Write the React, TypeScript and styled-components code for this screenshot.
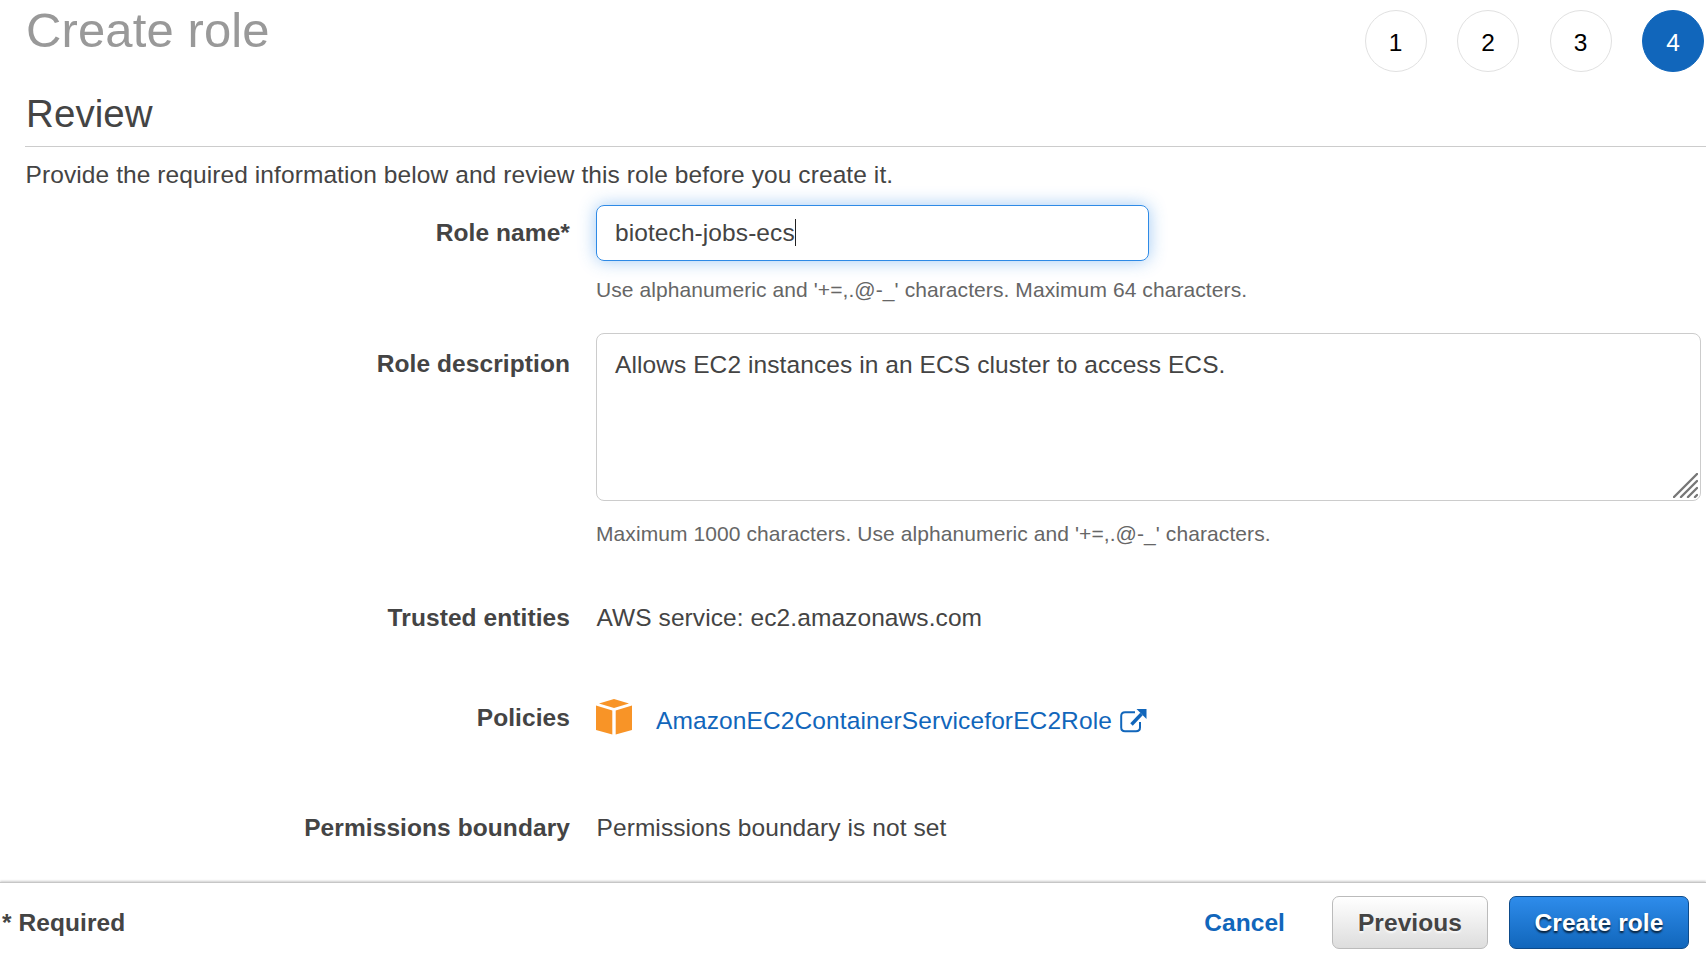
import React from "react";
import styled, { createGlobalStyle, css } from "styled-components";

const GlobalStyle = createGlobalStyle`
  * { box-sizing: border-box; }
  html, body { margin: 0; padding: 0; background: #fff; overflow: hidden; }
  body {
    font-family: "Liberation Sans", Arial, sans-serif;
    font-size: 24.5px;
    line-height: 35px;
    letter-spacing: 0.085px;
    color: #444;
  }
`;

const Page = styled.div`
  display: flex;
  flex-direction: column;
  height: 953px;
`;

const Main = styled.main`
  flex: 1;
  padding-left: 25px;
`;

const Header = styled.header`
  display: flex;
  justify-content: space-between;
  align-items: flex-start;
  height: 90px;
  padding: 0 2px 0 1px;
`;

const Title = styled.h1`
  margin: 2px 0 0;
  font-size: 49px;
  line-height: 56px;
  font-weight: 400;
  letter-spacing: 0.12px;
  color: #999;
`;

const Steps = styled.ol`
  display: flex;
  gap: 30.5px;
  margin: 10px 0 0;
  padding: 0;
  list-style: none;
`;

const Step = styled.li<{ $active?: boolean }>`
  display: flex;
  align-items: center;
  justify-content: center;
  width: 62px;
  height: 62px;
  padding-top: 2px;
  border: 1px solid ${(p) => (p.$active ? "#1166bb" : "#e1e1e1")};
  border-radius: 50%;
  background: ${(p) => (p.$active ? "#1166bb" : "#fff")};
  color: ${(p) => (p.$active ? "#fff" : "#000")};
`;

const SectionTitle = styled.h2`
  margin: 0;
  height: 57px;
  padding-left: 1px;
  border-bottom: 1px solid #ccc;
  font-size: 38.5px;
  line-height: 48px;
  font-weight: 400;
`;

const Intro = styled.p`
  margin: 10px 0 13px;
  padding-left: 0.6px;
`;

const Row = styled.div<{ $height: number }>`
  display: grid;
  grid-template-columns: 545px 1fr;
  column-gap: 26px;
  height: ${(p) => p.$height}px;
`;

const Label = styled.div<{ $top?: number }>`
  padding-top: ${(p) => p.$top ?? 0}px;
  text-align: right;
  font-weight: 700;
`;

const Value = styled.div`
  padding-left: 0.5px;
`;

const TextField = styled.div`
  display: flex;
  align-items: center;
  width: 553px;
  height: 56px;
  padding: 0 0 2px 18px;
  border: 1px solid #2e8ae6;
  border-radius: 8px;
  box-shadow: 0 0 17px rgba(46, 138, 230, 0.45);
`;

const Caret = styled.span`
  width: 1px;
  height: 27px;
  background: #222;
`;

const TextArea = styled.div`
  position: relative;
  width: 1105px;
  height: 168px;
  padding: 13px 18px;
  border: 1px solid #ccc;
  border-radius: 8px;
`;

const ResizeGrip = styled.svg`
  position: absolute;
  right: 2px;
  bottom: 2px;
`;

const Hint = styled.div<{ $gap: number }>`
  margin-top: ${(p) => p.$gap}px;
  font-size: 21px;
  line-height: 28px;
  color: #666;
`;

const Policy = styled.div`
  display: flex;
  align-items: flex-start;
`;

const PolicyIcon = styled.svg`
  margin: -1px 24px 0 0;
`;

const PolicyLink = styled.a`
  display: flex;
  margin-top: 3px;
  letter-spacing: 0.11px;
  color: #1166bb;
  text-decoration: none;
`;

const ExternalIcon = styled.svg`
  margin: 6px 0 0 8px;
`;

const Footer = styled.footer`
  display: flex;
  align-items: flex-start;
  height: 71px;
  padding: 13px 17px 0 2px;
  border-top: 1px solid #c6c6c6;
  background: #fff;
  box-shadow: 0 -1px 2px rgba(0, 0, 0, 0.2);
`;

const Required = styled.div`
  flex: 1;
  padding-top: 9px;
  font-weight: 700;
`;

const Cancel = styled.a`
  margin: 9px 47px 0 0;
  font-weight: 700;
  color: #1166bb;
  text-decoration: none;
`;

const Button = styled.button<{ $primary?: boolean }>`
  height: 53px;
  border-radius: 7px;
  padding: 0 0 1px;
  font: inherit;
  font-weight: 700;
  letter-spacing: inherit;
  ${(p) =>
    p.$primary
      ? css`
          width: 180px;
          margin-left: 21px;
          border: 1px solid #0d4b8b;
          background: linear-gradient(#2e8ceb, #1166bb);
          color: #fff;
          text-shadow: 0 2px 2px rgba(0, 0, 0, 0.75);
        `
      : css`
          width: 156px;
          border: 1px solid #bbb;
          background: linear-gradient(#fff, #ddd);
          color: #444;
          text-shadow: 0 2px 2px rgba(255, 255, 255, 0.75);
        `}
`;

export default function App() {
  return (
    <Page>
      <GlobalStyle />
      <Main>
        <Header>
          <Title>Create role</Title>
          <Steps>
            <Step>1</Step>
            <Step>2</Step>
            <Step>3</Step>
            <Step $active>4</Step>
          </Steps>
        </Header>
        <SectionTitle>Review</SectionTitle>
        <Intro>Provide the required information below and review this role before you create it.</Intro>
        <Row $height={128}>
          <Label $top={10}>Role name*</Label>
          <div>
            <TextField>
              biotech-jobs-ecs
              <Caret />
            </TextField>
            <Hint $gap={15}>Use alphanumeric and '+=,.@-_' characters. Maximum 64 characters.</Hint>
          </div>
        </Row>
        <Row $height={267}>
          <Label $top={13}>Role description</Label>
          <div>
            <TextArea>
              Allows EC2 instances in an ECS cluster to access ECS.
              <ResizeGrip width="25" height="25" viewBox="0 0 25 25" stroke="#777" strokeWidth="2.4" strokeLinecap="round">
                <path d="M1 24L24 1M8 24L24 8M15 24L24 15M22 24L24 22" />
              </ResizeGrip>
            </TextArea>
            <Hint $gap={19}>Maximum 1000 characters. Use alphanumeric and '+=,.@-_' characters.</Hint>
          </div>
        </Row>
        <Row $height={100}>
          <Label>Trusted entities</Label>
          <Value>AWS service: ec2.amazonaws.com</Value>
        </Row>
        <Row $height={110}>
          <Label>Policies</Label>
          <Policy>
            <PolicyIcon width="36" height="36" viewBox="0 0 36 36" fill="#f89427">
              <path d="M18 0L33 4.5L18 9L3 4.5Z" />
              <path d="M0 6.5L16.3 11.5V35.5L0 31Z" />
              <path d="M36 6.5L19.7 11.5V35.5L36 31Z" />
            </PolicyIcon>
            <PolicyLink href="#">
              AmazonEC2ContainerServiceforEC2Role
              <ExternalIcon width="27" height="24" viewBox="0 0 27 24" fill="none" stroke="#1166bb">
                <path d="M15 3.2H5Q1.2 3.2 1.2 7V18.5Q1.2 22.2 5 22.2H16Q20 22.2 20 18.5V13" strokeWidth="2" />
                <path d="M11.5 15.5L21.5 5" strokeWidth="3.4" />
                <path d="M16.5 0H26.5V10Z" fill="#1166bb" stroke="none" />
              </ExternalIcon>
            </PolicyLink>
          </Policy>
        </Row>
        <Row $height={50}>
          <Label>Permissions boundary</Label>
          <Value>Permissions boundary is not set</Value>
        </Row>
      </Main>
      <Footer>
        <Required>* Required</Required>
        <Cancel href="#">Cancel</Cancel>
        <Button>Previous</Button>
        <Button $primary>Create role</Button>
      </Footer>
    </Page>
  );
}
